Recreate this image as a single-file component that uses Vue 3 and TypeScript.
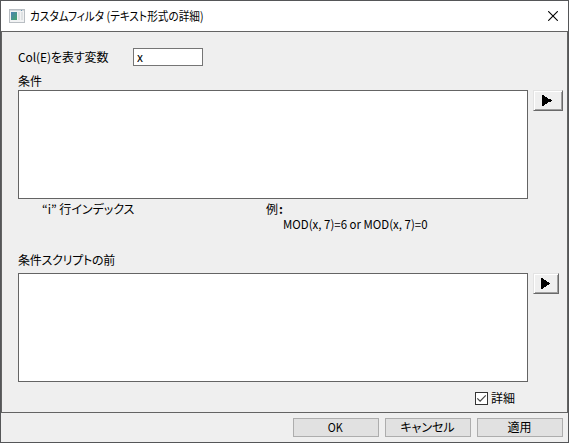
<script setup lang="ts">
import { ref } from 'vue'

const variable = ref('x')
const condition = ref('')
const script = ref('')
const details = ref(true)
const actions = [
  { label: 'OK', kind: 'ok' },
  { label: 'キャンセル', kind: 'cancel' },
  { label: '適用', kind: 'apply' },
]
</script>

<template>
  <div class="dialog">
    <header class="titlebar">
      <svg class="app-icon" width="16" height="14" viewBox="0 0 16 14">
        <defs>
          <linearGradient id="pane" x1="0" y1="0" x2="1" y2="1">
            <stop offset="0" stop-color="#4c82b4" />
            <stop offset="1" stop-color="#45a56c" />
          </linearGradient>
        </defs>
        <rect x="0.5" y="0.5" width="15" height="13" fill="#f2f3f4" stroke="#b9bec3" />
        <rect x="1" y="1" width="14" height="1" fill="#d2d7dc" />
        <rect x="12" y="1" width="1" height="1" fill="#6a94ad" />
        <rect x="2" y="3" width="6" height="8" fill="url(#pane)" />
        <rect x="9" y="3" width="2" height="8" fill="#dfe2e4" />
        <rect x="12" y="3" width="2" height="8" fill="#dfe2e4" />
      </svg>
      <h1 class="title">カスタムフィルタ (テキスト形式の詳細)</h1>
      <button class="close" aria-label="閉じる">
        <svg width="10" height="10" viewBox="0 0 10 10">
          <path d="M0.2 0.2L9.8 9.8M9.8 0.2L0.2 9.8" stroke="#000" stroke-width="1.1" />
        </svg>
      </button>
    </header>
    <main class="body">
      <div class="variable-row">
        <label class="variable-label" for="variable">Col(E)を表す変数</label>
        <input id="variable" v-model="variable" class="variable-input" />
      </div>
      <label class="field-label" for="condition">条件</label>
      <div class="editor-row">
        <textarea id="condition" v-model="condition" class="editor"></textarea>
        <button class="arrow wide">
          <svg width="10" height="11" viewBox="0 0 10 11" shape-rendering="crispEdges"><path d="M0 0H1L4 2L7 4L10 5V6L7 7L4 9L1 11H0Z" /></svg>
        </button>
      </div>
      <div class="hints">
        <p class="hint-index">“i” 行インデックス</p>
        <div class="example">
          <p class="example-label">例<span class="colon">:</span></p>
          <p class="example-code">MOD(x, 7)=6 or MOD(x, 7)=0</p>
        </div>
      </div>
      <label class="script-label" for="script">条件スクリプトの前</label>
      <div class="editor-row">
        <textarea id="script" v-model="script" class="editor"></textarea>
        <button class="arrow">
          <svg width="9" height="11" viewBox="0 0 9 11" shape-rendering="crispEdges"><path d="M0 0H1L4 2L6 4L9 5V6L6 7L4 9L1 11H0Z" /></svg>
        </button>
      </div>
      <label class="details">
        <input v-model="details" class="details-input" type="checkbox" />
        <span class="box">
          <svg v-if="details" width="11" height="11" viewBox="0 0 11 11"><path d="M1.3 5.3L4.1 8.1L9.8 2.4" fill="none" stroke="#444" stroke-width="1.2" /></svg>
        </span>
        <span class="details-text">詳細</span>
      </label>
    </main>
    <footer class="actions">
      <button v-for="a in actions" :key="a.kind" class="action">
        <span :class="a.kind">{{ a.label }}</span>
      </button>
    </footer>
  </div>
</template>

<style>
body {
  margin: 0;
  overflow: hidden;
}
</style>

<style scoped>
* {
  box-sizing: border-box;
}
.dialog {
  width: 569px;
  height: 443px;
  display: flex;
  flex-direction: column;
  border: 1px solid #555658;
  background: #efefef;
  color: #000;
  font: 12px/16px "Noto Sans CJK JP", sans-serif;
  font-feature-settings: "palt";
  white-space: nowrap;
}
p, h1 {
  margin: 0;
}
button, input, textarea {
  font: inherit;
  color: inherit;
  border-radius: 0;
  outline: 0;
  margin: 0;
}
.titlebar {
  height: 30px;
  flex: none;
  display: flex;
  align-items: center;
  padding: 0 10px 0 8px;
  background: #fff;
}
.title {
  font-size: 12px;
  font-weight: 400;
  margin-left: 5px;
  transform: scaleX(0.886);
  transform-origin: left;
}
.close {
  margin-left: auto;
  padding: 0 0 0 0;
  width: 10px;
  height: 10px;
  border: 0;
  background: none;
  display: flex;
}
.body {
  height: 382px;
  flex: none;
  display: flex;
  flex-direction: column;
  border: 1px solid #636363;
  padding: 16px 0 0 16px;
}
.variable-row {
  display: flex;
  height: 18px;
  align-items: center;
}
.variable-label {
  width: 115px;
  letter-spacing: -0.1px;
}
.variable-input {
  width: 70px;
  height: 18px;
  padding: 0 3px 1px;
  border: 1px solid #757575;
  background: #fff;
}
.field-label {
  margin-top: 7px;
  height: 17px;
}
.editor-row {
  display: flex;
  align-items: flex-start;
  gap: 5px;
}
.editor {
  width: 510px;
  height: 109px;
  padding: 3px;
  border: 1px solid #646464;
  background: #fff;
  resize: none;
}
.arrow {
  width: 26px;
  height: 21px;
  padding: 0 1px 0 0;
  display: flex;
  align-items: center;
  justify-content: center;
  background: #efefef;
  border: 1px solid;
  border-color: #e3e3e3 #696969 #696969 #e3e3e3;
  box-shadow: inset 1px 1px #fff, inset -1px -1px #a0a0a0;
}
.wide {
  width: 30px;
  padding-right: 2px;
}
.hints {
  display: flex;
  height: 53px;
  padding: 2px 0 0 24px;
}
.hint-index {
  width: 224px;
}
.colon {
  font-weight: 700;
  margin-left: 1px;
}
.example-code {
  margin: -1px 0 0 17px;
  transform: scaleX(0.954);
  transform-origin: left;
}
.script-label {
  height: 21px;
  letter-spacing: -0.25px;
}
.details {
  display: flex;
  align-items: center;
  height: 16px;
  margin: 8px 0 0 457px;
}
.details-input {
  appearance: none;
  width: 0;
  height: 0;
}
.box {
  width: 13px;
  height: 13px;
  display: flex;
  border: 1px solid #333;
  background: #fff;
}
.details-text {
  margin-left: 3px;
}
.actions {
  display: flex;
  justify-content: flex-end;
  gap: 6px;
  padding: 5px 5px 0 0;
}
.action {
  width: 86px;
  height: 19px;
  padding: 0 1px 2px 0;
  display: flex;
  align-items: center;
  justify-content: center;
  background: #e1e1e1;
  border: 1px solid #adadad;
}
.ok {
  transform: scaleX(0.9);
}
</style>
